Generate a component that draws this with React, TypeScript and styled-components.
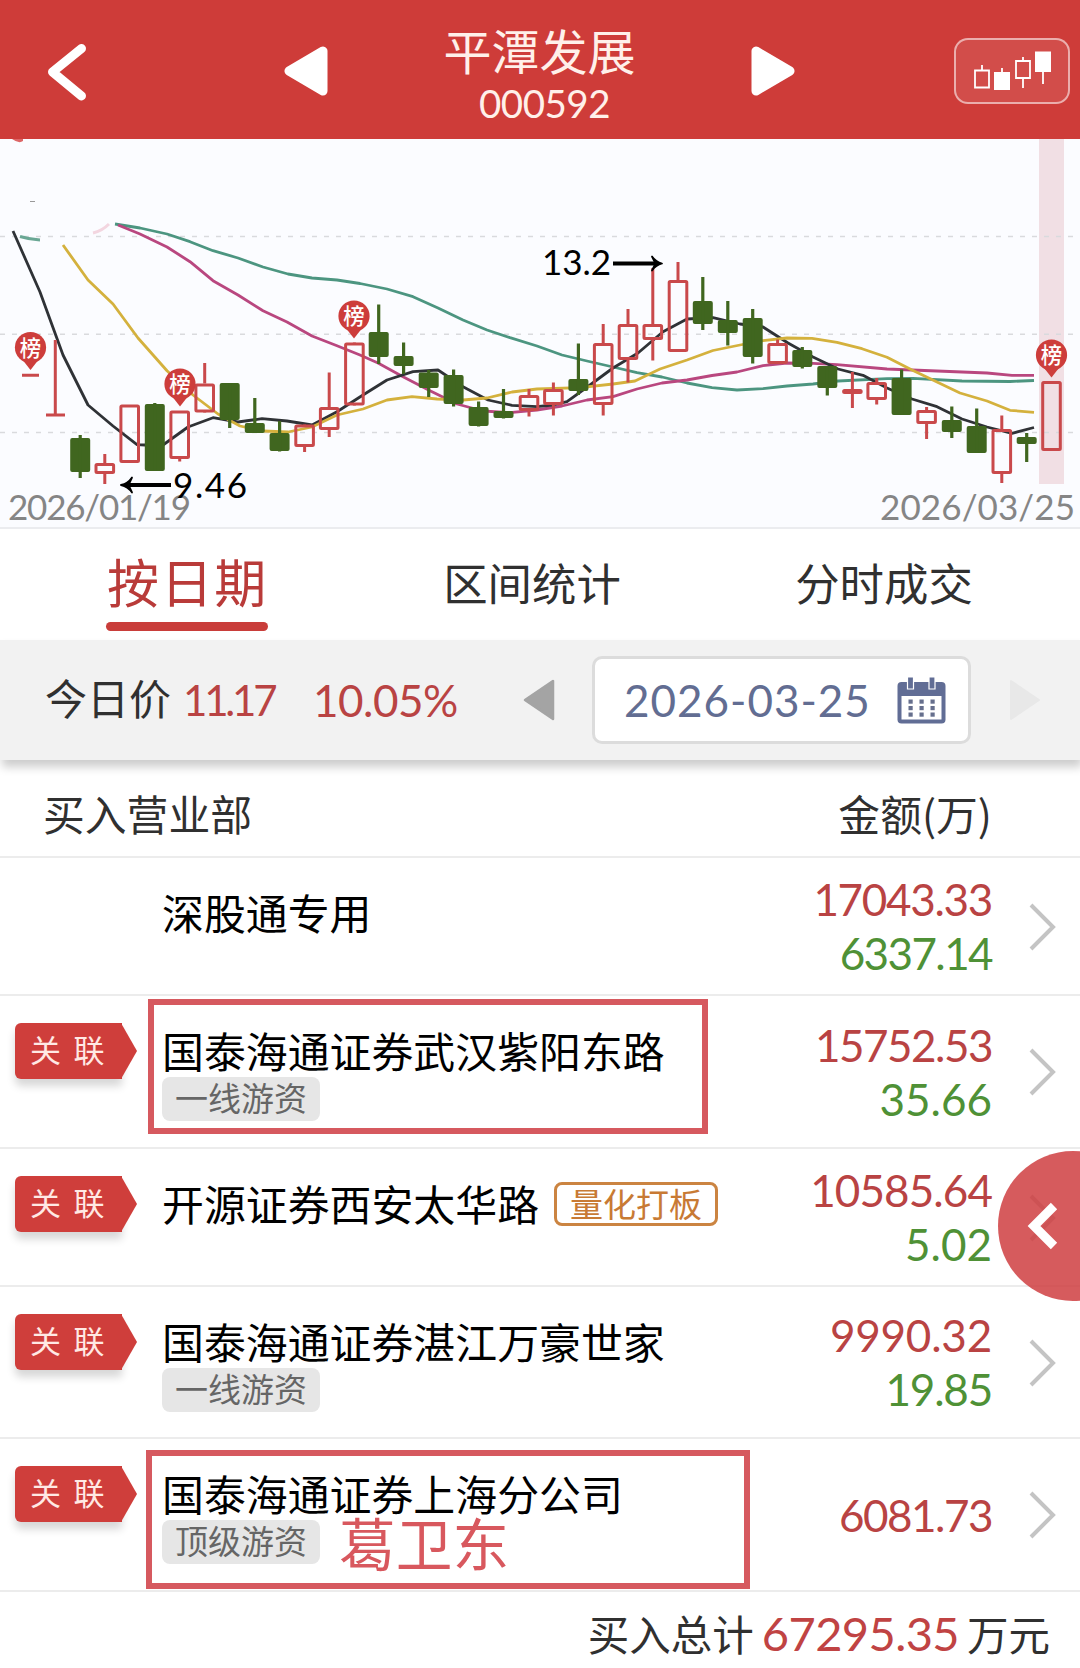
import React from "react";
import styled, { createGlobalStyle } from "styled-components";

const CJK = `"Noto Sans CJK SC", sans-serif`;
const NUM = `Lato, "Noto Sans CJK SC", sans-serif`;

const GlobalStyle = createGlobalStyle`
  * { box-sizing: border-box; }
  body { margin: 0; background: #fff; }
`;

const Screen = styled.main`
  position: relative;
  display: flex;
  flex-direction: column;
  width: 1080px;
  height: 1668px;
  overflow: hidden;
  background: #fff;
  color: #303030;
  font-family: ${CJK};
  white-space: nowrap;
`;

/* ---------- header ---------- */

const TopBar = styled.header`
  display: grid;
  grid-template-columns: 284px 1fr 285px;
  align-items: center;
  height: 139px;
  background: #ce3c39;
  color: #fff0ea;
`;

const BackButton = styled.div`
  display: flex;
  padding: 4px 0 0 43px;
`;

const StockSwitch = styled.div`
  display: flex;
  align-items: center;
  justify-content: space-between;
  padding-top: 3px;
`;

const StockTitle = styled.div`
  display: flex;
  flex-direction: column;
  align-items: center;
  padding-top: 6px;
`;

const StockName = styled.h1`
  margin: 0;
  font-size: 48px;
  font-weight: 400;
  line-height: 54px;
`;

const StockCode = styled.div`
  padding: 4px 0 0 10px;
  font: 400 38.5px/46px ${NUM};
  letter-spacing: -0.5px;
`;

const ChartButton = styled.div`
  display: flex;
  justify-self: end;
  align-items: center;
  justify-content: center;
  width: 116px;
  height: 66px;
  margin: 3px 10px 0 0;
  border: 2px solid rgba(255, 255, 255, 0.55);
  border-radius: 14px;
  background: rgba(255, 255, 255, 0.09);
`;

/* ---------- chart ---------- */

const ChartPanel = styled.section`
  height: 390px;
  border-bottom: 2px solid #ebecef;
  background: #fbfcff;
  svg { display: block; }
`;

const UP = "#c9494b";
const DOWN = "#40661f";

type Candle = [x: number, top: number, bottom: number, high: number, low: number, up: 0 | 1];

const candles: Candle[] = [
  [80.2, 438, 472, 435, 478, 0],
  [104.8, 463, 474, 454, 484, 1],
  [129.7, 404.5, 463, 404.5, 463, 1],
  [154.8, 404, 471, 403, 471, 0],
  [179.7, 410.5, 459, 410.5, 461.5, 1],
  [204.7, 383.5, 412.5, 363, 412, 1],
  [229.7, 383, 420, 383, 428, 0],
  [254.8, 423, 433, 398, 433, 0],
  [279.6, 433, 451, 421, 451.5, 0],
  [304.6, 424.5, 447, 424, 452, 1],
  [329.2, 407, 430, 372.5, 437, 1],
  [354.4, 342.5, 405.5, 343, 405, 1],
  [378.7, 332, 357, 304.5, 364, 0],
  [403.6, 356, 366, 342.5, 374, 0],
  [428.7, 372.5, 388, 370, 397, 0],
  [453.6, 375, 404, 369.5, 406.5, 0],
  [478.6, 407, 426, 401.5, 426.5, 0],
  [503.5, 411, 418, 389, 418.5, 0],
  [529, 395, 411, 389, 416.5, 1],
  [553.4, 389, 405, 382.5, 415.5, 1],
  [578.4, 379, 391, 343.5, 395, 0],
  [603.2, 343, 405, 324, 415.5, 1],
  [628, 324, 360, 309, 382.5, 1],
  [652.8, 324, 340, 268, 360.5, 1],
  [678, 280, 352, 262, 352, 1],
  [702.8, 301, 324, 277, 330, 0],
  [727.8, 320, 333, 301, 345.5, 0],
  [752.7, 318, 357, 309, 363.5, 0],
  [777.6, 343, 364, 339.5, 364, 1],
  [802.3, 350, 367, 347, 368.5, 0],
  [827.3, 366, 388, 366, 395.5, 0],
  [852.4, 389, 394, 372, 408, 1],
  [876.7, 382, 400, 378, 404.5, 1],
  [901.6, 378, 415, 369.5, 415, 0],
  [926.6, 410, 424, 407, 439, 1],
  [951.8, 420, 432, 406.5, 438, 0],
  [976.7, 426, 453, 408.5, 453, 0],
  [1001.8, 429, 474, 415.5, 483, 1],
  [1026.7, 437, 444, 433, 462, 0],
  [1051.5, 381, 451, 381, 451, 1],
];

const averages: { color: string; points: string }[] = [
  {
    color: "#4c9580",
    points:
      "115,224 140,228 167,234 190,241.7 213,250.7 238,258 263,267 288,274 312,278 337,280 360,283.5 387,289 413,296.7 438,308 463,320 487,330 510,337.7 537,346 562,355 587,361 613,367 637,372.7 662,377 687,383 712,387.7 737,390 763,388.7 787,386 813,384 838,381 887,378.7 913,378.3 962,381 1010,381.5 1034,380.5",
  },
  {
    color: "#b9477f",
    points:
      "118,225 140,234 167,247 190,261.7 213,280.7 238,295 263,310.7 287,322 312,336 337,345.7 360,355 378,363 403,376.7 430,390.7 457,404 483,411 510,412.7 537,410 562,406 587,400 613,396.7 637,389 662,383 687,380 712,375.5 737,372 763,365.7 787,363 813,363.3 837,364.7 887,369 937,371 987,373 1012,375.3 1034,375.3",
  },
  {
    color: "#2f3236",
    points:
      "13,231 40,292 63,355 88,405 113,426 137,444.7 145,445 163,445 188,427 213,417.7 238,422 262,418.7 287,421 312,425 337,411.7 363,395 387,380 413,371.7 438,370 463,386.7 488,400 512,405.3 537,406.7 553,405 567,401.7 590,385 613,368 638,353 663,331.7 687,319 713,317.7 740,324 763,327 788,343 813,357 838,369 863,375.3 887,388 912,399 937,406.7 962,419 987,427 1012,433.3 1034,427.5",
  },
  {
    color: "#d4b13d",
    points:
      "63,245 88,280 113,304 138,338 167,370.7 193,395 218,414 240,426 263,431 288,432 312,427 337,415 363,409 387,400 412,396.7 437,399 463,400 487,398 512,392 537,389 580,387.7 613,384 635,381 660,369 687,360 713,350.5 740,345 763,340.7 787,338 812,338.3 837,342.3 862,348.7 887,357.3 912,370 937,382 960,393 987,401 1010,410.3 1034,412.3",
  },
];

const badges = [
  { x: 30.5, y: 347.5 },
  { x: 180, y: 384 },
  { x: 354, y: 316 },
  { x: 1051.5, y: 355 },
];

function CandleMark({ data: [x, top, bottom, high, low, up] }: { data: Candle }) {
  if (!up) {
    return (
      <g fill={DOWN}>
        <rect x={x - 10} y={top} width={20} height={bottom - top} rx={2} />
        <rect x={x - 1.6} y={high} width={3.2} height={low - high} />
      </g>
    );
  }
  return (
    <g fill="none" stroke={UP} strokeWidth={3}>
      <rect x={x - 8.8} y={top + 1.5} width={17.6} height={Math.max(bottom - top - 3, 1)} rx={1} />
      <path d={`M${x} ${high}V${top} M${x} ${bottom}V${low}`} />
    </g>
  );
}

function PriceChart() {
  return (
    <svg width="1080" height="388" viewBox="0 139 1080 388">
      <rect x="1039" y="139" width="25" height="345" fill="#f1dfe4" />
      <path d="M0 236.5H1080M0 334.3H1080M0 432.5H1080" stroke="#d9dadd" strokeWidth="1.5" strokeDasharray="5 7" />
      <path d="M12 139h11v2q-4 3-11-2z" fill="#d66" />
      <path d="M30 201.500h5" stroke="#999" strokeWidth="1" />
      <path d="M93 233q9-2 16-9" stroke="#f3d6e0" strokeWidth="3" fill="none" />
      <path d="M20 236.5q10 3 20 3.5" stroke="#6aa794" strokeWidth="3" fill="none" />
      {averages.map((line) => (
        <polyline key={line.color} points={line.points} fill="none" stroke={line.color} strokeWidth="2.8" strokeLinejoin="round" />
      ))}
      <path d="M22 375.3H39M46 415H65M55.3 340V415" stroke={UP} strokeWidth="3" />
      {candles.map((c) => (
        <CandleMark key={c[0]} data={c} />
      ))}
      {badges.map((b) => (
        <g key={b.x}>
          <circle cx={b.x} cy={b.y} r="15.6" fill="#cd3d3b" />
          <path d={`M${b.x - 9} ${b.y + 11}L${b.x} ${b.y + 22.5}L${b.x + 9} ${b.y + 11}z`} fill="#cd3d3b" />
          <text x={b.x} y={b.y + 8} textAnchor="middle" fontSize="21.5" fontWeight="500" fill="#fff" fontFamily={CJK}>榜</text>
        </g>
      ))}
      <g stroke="#000" strokeWidth="4" strokeLinejoin="round">
        <path d="M613 263.5H656M171 485H127" />
        <path d="M652 256.500Q656 262 662 263.500Q656 265 652 270.500L655.500 263.500z" strokeWidth="1.800" />
        <path d="M132 477.500Q128 483.500 121 485Q128 486.500 132 492.500L128.500 485z" strokeWidth="1.800" />
      </g>
      <g fontFamily={NUM} fontSize="35">
        <text x="8" y="520" fill="#858585" textLength="183">2026/01/19</text>
        <text x="880" y="520" fill="#858585" textLength="195">2026/03/25</text>
        <text x="542" y="275" fill="#000" textLength="69">13.2</text>
        <text x="173" y="497.500" fill="#000" textLength="74">9.46</text>
      </g>
    </svg>
  );
}

/* ---------- tabs ---------- */

const Tabs = styled.nav`
  display: grid;
  grid-template-columns: 374px 316px 388px;
  justify-items: center;
  height: 111px;
`;

const Tab = styled.div<{ $active?: boolean }>`
  display: flex;
  flex-direction: column;
  height: 102px;
  padding-left: ${(p) => (p.$active ? 1 : 0)}px;
  font-size: ${(p) => (p.$active ? 52 : 44.4)}px;
  letter-spacing: ${(p) => (p.$active ? 1.7 : 0)}px;
  line-height: ${(p) => (p.$active ? 104 : 106)}px;
  color: ${(p) => (p.$active ? "#b93b39" : "#303030")};

  &::after {
    content: "";
    display: ${(p) => (p.$active ? "block" : "none")};
    flex: none;
    height: 9px;
    margin: -11px 0 0 -1px;
    border-radius: 5px;
    background: #c93d3a;
  }
`;

/* ---------- date bar ---------- */

const DateBar = styled.section`
  position: relative;
  display: flex;
  align-items: center;
  height: 120px;
  padding-left: 45px;
  background: #f2f2f2;
  box-shadow: 2px 7px 9px rgba(0, 0, 0, 0.2);
`;

const Label = styled.span`
  width: 138px;
  margin-top: -6px;
  font-size: 42px;
  line-height: 60px;
`;

const Figure = styled.span<{ $size?: number; $track?: number; $color?: string; $width?: number }>`
  width: ${(p) => (p.$width ? `${p.$width}px` : "auto")};
  font-family: ${NUM};
  font-size: ${(p) => p.$size ?? 44}px;
  letter-spacing: ${(p) => p.$track ?? 0}px;
  line-height: 54px;
  color: ${(p) => p.$color ?? "#b94343"};
`;

const DatePicker = styled.div`
  display: flex;
  align-items: center;
  justify-content: space-between;
  width: 379px;
  height: 88px;
  margin: 0 38px 0 37px;
  padding: 0 22px 0 29px;
  border: 3px solid #dcdcdc;
  border-radius: 10px;
  background: #fff;
`;

function CalendarIcon() {
  return (
    <svg width="49" height="47" viewBox="0 0 49 47">
      <rect x="0.5" y="5" width="48" height="41.500" rx="4" fill="#616d95" />
      <rect x="4.500" y="19" width="40" height="23.500" fill="#fff" />
      <path d="M10.500 0h6v12h-6zM32 0h6v12h-6z" fill="#616d95" stroke="#fff" strokeWidth="1.200" />
      {[11.5, 22.5, 33.5].map((x) =>
        [22.5, 29, 35.5].map((y) => <rect key={`${x}-${y}`} x={x} y={y} width="4.200" height="4.200" fill="#666f8d" />)
      )}
    </svg>
  );
}

/* ---------- broker list ---------- */

const ListHead = styled.div`
  display: flex;
  justify-content: space-between;
  height: 98px;
  padding: 22px 88px 0 43px;
  border-bottom: 2px solid #ececec;
  font-size: 41.8px;
  line-height: 62px;
`;

const Row = styled.div<{ $h: number }>`
  position: relative;
  display: grid;
  grid-template-columns: 162px 1fr auto 88px;
  height: ${(p) => p.$h}px;
  border-bottom: 2px solid #ececec;
`;

const RibbonCell = styled.div`
  padding: 27px 0 0 15px;
`;

const Ribbon = styled.div`
  position: relative;
  width: 107px;
  height: 56px;
  padding-left: 15px;
  border-radius: 6px 0 0 6px;
  background: #cf3e3b;
  box-shadow: 0 7px 9px rgba(0, 0, 0, 0.16);
  color: #ffe9e4;
  font-size: 31px;
  line-height: 52px;
  letter-spacing: 12.5px;

  &::after {
    content: "";
    position: absolute;
    top: 0;
    left: 106px;
    width: 16px;
    height: 56px;
    background: #cf3e3b;
    clip-path: polygon(0 0, 100% 50%, 0 100%);
  }
`;

const Broker = styled.div`
  padding-top: 32px;
`;

const BrokerLine = styled.div`
  display: flex;
  align-items: center;
  gap: 15px;
  height: 44px;
  margin-bottom: 5px;
  font-size: 41.9px;
  line-height: 44px;
  color: #000;
`;

const TagLine = styled.div`
  display: flex;
  gap: 19px;
  height: 44px;
`;

const Tag = styled.span<{ $outlined?: boolean }>`
  height: 44px;
  margin-top: ${(p) => (p.$outlined ? 1 : 0)}px;
  padding: 0 13px;
  border: ${(p) => (p.$outlined ? "3px solid #cb8441" : "0")};
  border-radius: 8px;
  background: ${(p) => (p.$outlined ? "#fff" : "#e6e6e6")};
  color: ${(p) => (p.$outlined ? "#c87a34" : "#666")};
  font-size: 33px;
  line-height: ${(p) => (p.$outlined ? 36 : 40)}px;
`;

const Note = styled.span`
  margin-top: -1px;
  font-size: 56.7px;
  line-height: 44px;
  color: #d8585e;
`;

const Amounts = styled.div`
  display: flex;
  flex-direction: column;
  align-items: flex-end;
  justify-content: center;
`;

const More = styled.div`
  display: flex;
  align-items: center;
  padding: 1px 0 0 37px;
`;

const Frame = styled.div<{ $x: number; $y: number; $w: number; $h: number }>`
  position: absolute;
  left: ${(p) => p.$x}px;
  top: ${(p) => p.$y}px;
  width: ${(p) => p.$w}px;
  height: ${(p) => p.$h}px;
  border: 6px solid #d6595f;
`;

const Total = styled.footer`
  display: flex;
  justify-content: flex-end;
  align-items: center;
  gap: 8px;
  height: 76px;
  padding: 6px 30px 0 0;
  font-size: 41.5px;
`;

const Drawer = styled.div`
  position: absolute;
  top: 1151px;
  left: 998px;
  display: flex;
  align-items: center;
  width: 150px;
  height: 150px;
  padding-left: 28px;
  border-radius: 50%;
  background: rgba(206, 60, 62, 0.84);
`;

type Entry = {
  name: string;
  h: number;
  linked?: boolean;
  tag?: string;
  chip?: string;
  note?: string;
  buy: string;
  buyTrack?: number;
  sell?: string;
  sellTrack?: number;
  frame?: [number, number, number, number];
};

const entries: Entry[] = [
  { name: "深股通专用", h: 138, buy: "17043.33", buyTrack: -1.3, sell: "6337.14", sellTrack: -1.6 },
  { name: "国泰海通证券武汉紫阳东路", h: 153, linked: true, tag: "一线游资", buy: "15752.53", buyTrack: -1.5, sell: "35.66", frame: [148, 3, 560, 135] },
  { name: "开源证券西安太华路", h: 138, linked: true, chip: "量化打板", buy: "10585.64", buyTrack: -0.9, sell: "5.02" },
  { name: "国泰海通证券湛江万豪世家", h: 152, linked: true, tag: "一线游资", buy: "9990.32", buyTrack: -0.2, sell: "19.85", sellTrack: -1.2 },
  { name: "国泰海通证券上海分公司", h: 153, linked: true, tag: "顶级游资", note: "葛卫东", buy: "6081.73", buyTrack: -1.5, frame: [146, 11, 604, 139] },
];

export default function App() {
  return (
    <Screen>
      <GlobalStyle />
      <TopBar>
        <BackButton>
          <svg width="46" height="62" viewBox="0 0 46 62">
            <path d="M38.500 7.500L9.500 31L38.500 55" fill="none" stroke="#fff" strokeWidth="9" strokeLinecap="round" strokeLinejoin="round" />
          </svg>
        </BackButton>
        <StockSwitch>
          <svg width="44" height="50" viewBox="0 0 44 50">
            <path d="M5 25L39 5V45z" fill="#fff" stroke="#fff" strokeWidth="9" strokeLinejoin="round" />
          </svg>
          <StockTitle>
            <StockName>平潭发展</StockName>
            <StockCode>000592</StockCode>
          </StockTitle>
          <svg width="44" height="50" viewBox="0 0 44 50">
            <path d="M39 25L5 5V45z" fill="#fff" stroke="#fff" strokeWidth="9" strokeLinejoin="round" />
          </svg>
        </StockSwitch>
        <ChartButton>
          <svg width="80" height="44" viewBox="972 49 80 44">
            <g fill="none" stroke="#fff" strokeWidth="1.800">
              <path d="M975 70.500h14v17h-14zM982 65v5" />
              <path d="M1016 61h14v17h-14zM1023 57v4M1023 78v10" />
              <path d="M1002 68v5M1043 71v13" />
            </g>
            <path d="M994 72h16v18h-16zM1035 51.500h16v20.500h-16z" fill="#fff" />
          </svg>
        </ChartButton>
      </TopBar>

      <ChartPanel>
        <PriceChart />
      </ChartPanel>

      <Tabs>
        <Tab $active>按日期</Tab>
        <Tab>区间统计</Tab>
        <Tab>分时成交</Tab>
      </Tabs>

      <DateBar>
        <Label>今日价</Label>
        <Figure $size={42} $track={-3.2} $width={130}>11.17</Figure>
        <Figure $track={-0.5} $width={210}>10.05%</Figure>
        <svg width="32" height="42" viewBox="0 0 32 42">
          <path d="M2 21L30 2V40z" fill="#a4a4a4" stroke="#a4a4a4" strokeWidth="2.500" strokeLinejoin="round" />
        </svg>
        <DatePicker>
          <Figure $color="#626d92" $track={1}>2026-03-25</Figure>
          <CalendarIcon />
        </DatePicker>
        <svg width="32" height="42" viewBox="0 0 32 42">
          <path d="M30 21L2 2V40z" fill="#e8e8e8" stroke="#e8e8e8" strokeWidth="2" strokeLinejoin="round" />
        </svg>
      </DateBar>

      <ListHead>
        <span>买入营业部</span>
        <span>金额(万)</span>
      </ListHead>

      {entries.map((e) => (
        <Row key={e.name} $h={e.h}>
          <RibbonCell>{e.linked && <Ribbon>关联</Ribbon>}</RibbonCell>
          <Broker>
            <BrokerLine>
              <span>{e.name}</span>
              {e.chip && <Tag $outlined>{e.chip}</Tag>}
            </BrokerLine>
            {e.tag && (
              <TagLine>
                <Tag>{e.tag}</Tag>
                {e.note && <Note>{e.note}</Note>}
              </TagLine>
            )}
          </Broker>
          <Amounts>
            <Figure $track={e.buyTrack}>{e.buy}</Figure>
            {e.sell && <Figure $color="#4f9136" $track={e.sellTrack}>{e.sell}</Figure>}
          </Amounts>
          <More>
            <svg width="28" height="48" viewBox="0 0 28 48">
              <path d="M2 2L24 24L2 46" fill="none" stroke="#c4c4c4" strokeWidth="4" />
            </svg>
          </More>
          {e.frame && <Frame $x={e.frame[0]} $y={e.frame[1]} $w={e.frame[2]} $h={e.frame[3]} />}
        </Row>
      ))}

      <Total>
        <span>买入总计</span>
        <Figure $size={47} $track={-0.6} $color="#c04343">67295.35</Figure>
        <span>万元</span>
      </Total>

      <Drawer>
        <svg width="32" height="48" viewBox="0 0 32 48">
          <path d="M28 4L8 24L28 44" fill="none" stroke="#fff" strokeWidth="9" />
        </svg>
      </Drawer>
    </Screen>
  );
}
